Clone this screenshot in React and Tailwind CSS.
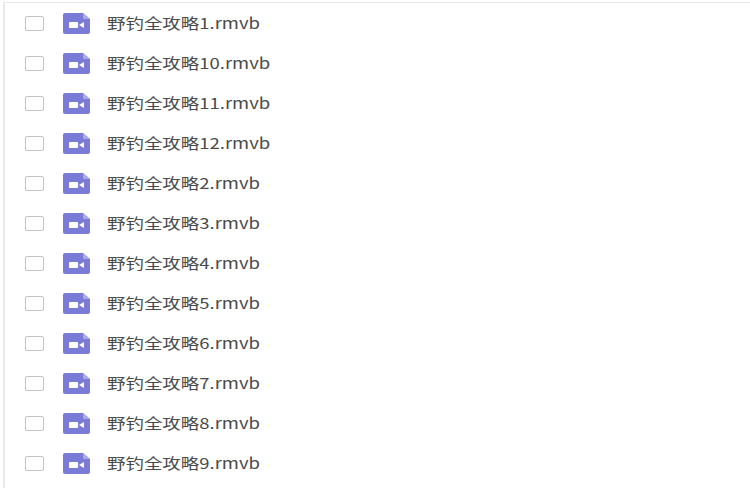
import React from "react";

const files = ["1", "10", "11", "12", "2", "3", "4", "5", "6", "7", "8", "9"];

function VideoIcon() {
  return (
    <svg width="28" height="21" viewBox="0 0 28 21" className="shrink-0">
      <path d="M2 0H20L27 6V19a2 2 0 0 1-2 2H2a2 2 0 0 1-2-2V2a2 2 0 0 1 2-2Z" fill="#7a7bd6" />
      <path d="M20 0L27 6H21.5a1.5 1.5 0 0 1-1.5-1.5Z" fill="#a9aae8" />
      <rect x="6" y="9" width="9" height="6" rx="0.5" fill="#fff" />
      <path d="M16 12L21 9V15Z" fill="#fff" />
    </svg>
  );
}

export default function App() {
  return (
    <div className="h-[488px] w-[750px] overflow-hidden bg-white font-['Noto_Sans_CJK_SC','Noto_Sans',sans-serif]">
      <div className="ml-[3px] mt-[2px] h-[486px] border-l-2 border-t border-[#e8e8e8]">
        {files.map((n) => (
          <div key={n} className="flex h-10 items-center pl-5">
            <div className="h-[15px] w-[19px] shrink-0 rounded-[2px] border border-[#c4c4c4] bg-white" />
            <div className="ml-[19px]">
              <VideoIcon />
            </div>
            <span className="ml-4 origin-left -translate-y-px scale-x-[1.23] whitespace-nowrap text-[15px] leading-none text-[#4a4a4a]">
              野钓全攻略{n}.rmvb
            </span>
          </div>
        ))}
      </div>
    </div>
  );
}
